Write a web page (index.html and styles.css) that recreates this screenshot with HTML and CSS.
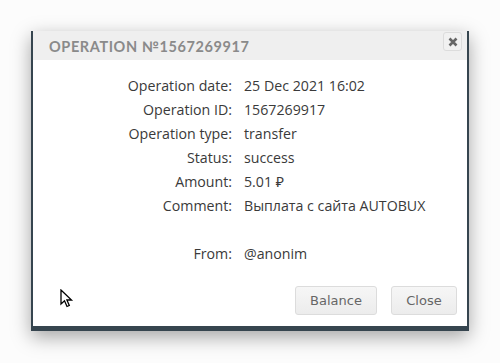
FILE: index.html
```html
<!DOCTYPE html>
<html>
<head>
<meta charset="utf-8">
<link rel="stylesheet" href="styles.css">
</head>
<body>
<div class="dialog">
  <div class="titlebar">
    <span class="title">OPERATION №1567269917</span>
    <button class="x" aria-label="close">
      <svg width="10" height="10" viewBox="0 0 10 10"><path d="M1.5 1.5 L8.5 8.5 M8.5 1.5 L1.5 8.5" stroke="#666" stroke-width="2.6" stroke-linecap="butt"/></svg>
    </button>
  </div>
  <div class="content">
    <div class="grid">
      <div class="lbl">Operation date:</div><div class="val">25 Dec 2021 16:02</div>
      <div class="lbl">Operation ID:</div><div class="val">1567269917</div>
      <div class="lbl">Operation type:</div><div class="val">transfer</div>
      <div class="lbl">Status:</div><div class="val">success</div>
      <div class="lbl">Amount:</div><div class="val">5.01 ₽</div>
      <div class="lbl">Comment:</div><div class="val">Выплата с сайта AUTOBUX</div>
      <div class="lbl"></div><div class="val"></div>
      <div class="lbl">From:</div><div class="val">@anonim</div>
    </div>
  </div>
  <div class="footer">
    <svg class="cursor" width="14" height="20" viewBox="0 0 14 20"><path d="M1 1 L1 15 L4.5 11.8 L7 17.5 L9.3 16.5 L6.9 11 L11.5 11 Z" fill="#fff" stroke="#000" stroke-width="1.3" stroke-linejoin="miter"/></svg>
    <div class="buttons">
      <button class="btn">Balance</button>
      <button class="btn">Close</button>
    </div>
  </div>
</div>
</body>
</html>
```
FILE: styles.css
```css
html, body { margin: 0; padding: 0; }
body {
  background: #fcfcfc;
  width: 500px;
  height: 363px;
  padding: 31px 0 0 31px;
  box-sizing: border-box;
  font-family: "Open Sans", "Noto Sans", sans-serif;
}
.dialog {
  width: 438px;
  height: 300px;
  box-sizing: border-box;
  background: #fff;
  border-left: 2px solid #36454f;
  border-right: 2px solid #36454f;
  border-bottom: 5px solid #36454f;
  box-shadow: 0 6px 18px rgba(0,0,0,0.35);
  display: flex;
  flex-direction: column;
}
.titlebar {
  height: 29px;
  background: #efefef;
  display: flex;
  align-items: center;
  justify-content: space-between;
  padding: 0 5px 0 16px;
}
.title {
  font-family: "Lato", sans-serif;
  font-weight: 700;
  font-size: 14.5px;
  letter-spacing: 0.6px;
  color: #8a8a8a;
  margin-top: 1px;
}
.x {
  width: 19px;
  height: 19px;
  padding: 0;
  margin-top: -8px;
  border: 1px solid #dcdcdc;
  border-radius: 3px;
  background: #f1f1f1;
  display: flex;
  align-items: center;
  justify-content: center;
}
.content {
  padding-top: 14px;
  flex: 1;
}
.grid {
  display: grid;
  grid-template-columns: 199px 1fr;
  column-gap: 12px;
  grid-auto-rows: 24px;
  font-size: 14.2px;
  color: #3a3a3a;
}
.lbl, .val { line-height: 24px; white-space: nowrap; }
.lbl { text-align: right; }
.footer {
  display: flex;
  justify-content: space-between;
  align-items: flex-end;
  padding: 0 10px 11px 27px;
}
.cursor { margin-bottom: 6px; }
.buttons { display: flex; gap: 14px; }
.btn {
  height: 29px;
  padding: 0 14px;
  font-family: "DejaVu Sans", sans-serif;
  font-size: 13px;
  color: #666;
  background: linear-gradient(#f6f6f6, #ececec);
  border: 1px solid #dcdcdc;
  border-radius: 3px;
}
.btn:first-child { width: 82px; }
.btn:last-child { width: 66px; }
```
